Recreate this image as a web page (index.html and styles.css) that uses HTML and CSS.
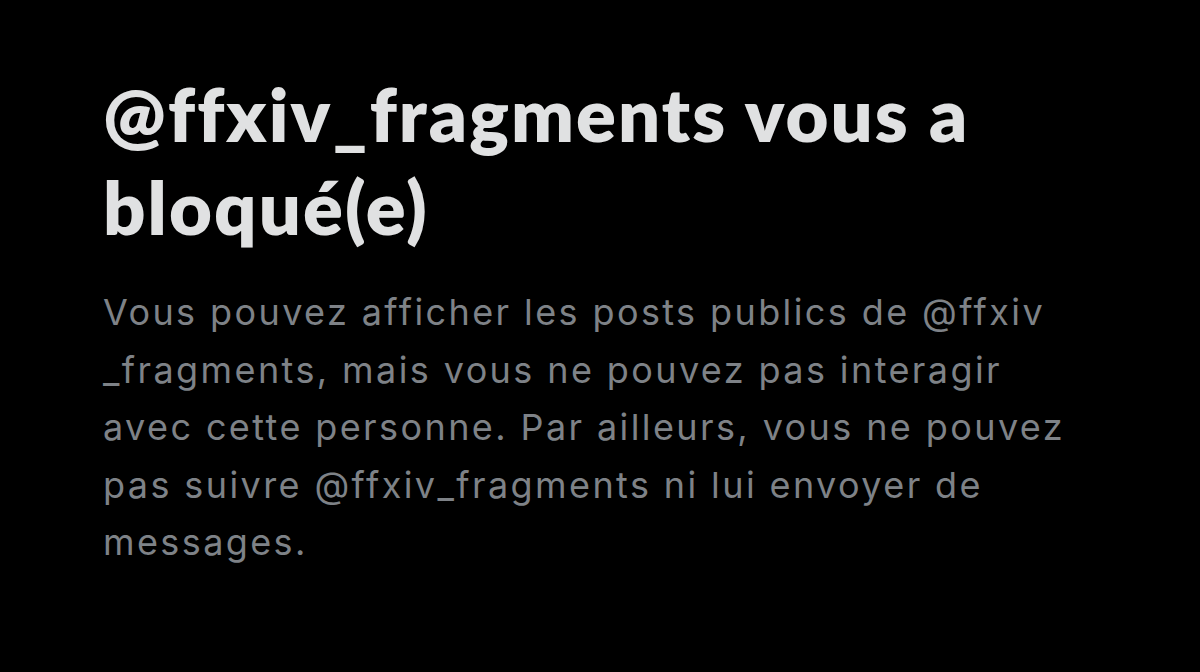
FILE: index.html
```html
<!DOCTYPE html>
<html lang="fr">
<head>
    <meta charset="UTF-8">
    <title>Compte bloqué</title>
    <meta name="viewport" content="width=device-width, initial-scale=1.0">
    <link rel="stylesheet" href="styles.css">
</head>
<body>

<div class="blocked">
    <h2 class="blocked-title">@ffxiv<wbr>_fragments vous a bloqué(e)</h2>
    <p class="blocked-text">
        Vous pouvez afficher les posts publics de @ffxiv<wbr>_fragments, mais vous ne pouvez pas interagir
        avec cette personne. Par ailleurs, vous ne pouvez pas suivre @ffxiv<wbr>_fragments ni lui envoyer de messages.
    </p>
</div>

</body>
</html>
```

FILE: styles.css
```css
* {
    box-sizing: border-box;
}

body {
    margin: 0;
    background: #000;
    min-height: 100vh;
}

.blocked {
    padding: 67px 0 0 103px;
    max-width: 1090px;
}

.blocked-title {
    margin: 0;
    font-family: Lato, 'Liberation Sans', sans-serif;
    font-weight: 800;
    font-size: 74px;
    line-height: 93px;
    letter-spacing: 2.1px;
    color: #e0e1e2;
}

.blocked-text {
    margin: 31px 0 0;
    font-family: Inter, 'Liberation Sans', sans-serif;
    font-weight: 400;
    font-size: 36px;
    line-height: 57.5px;
    letter-spacing: 2.4px;
    color: #7e8287;
}
```
